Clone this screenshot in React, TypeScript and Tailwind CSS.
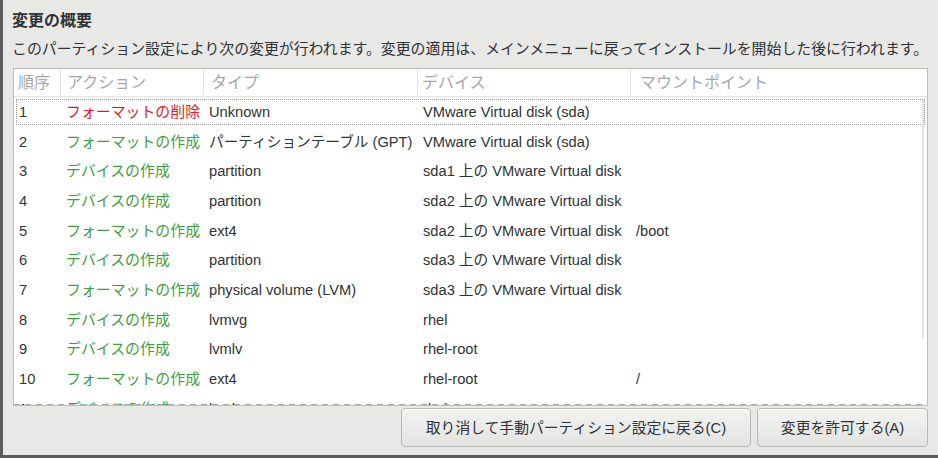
import React from 'react';

const RED = 'text-[#e8161c]';
const GREEN = 'text-[#3c9f3c]';

const rows = [
  { n: '1', action: 'フォーマットの削除', del: true, type: 'Unknown', device: 'VMware Virtual disk (sda)', mount: '' },
  { n: '2', action: 'フォーマットの作成', type: 'パーティションテーブル (GPT)', device: 'VMware Virtual disk (sda)', mount: '' },
  { n: '3', action: 'デバイスの作成', type: 'partition', device: 'sda1 上の VMware Virtual disk', mount: '' },
  { n: '4', action: 'デバイスの作成', type: 'partition', device: 'sda2 上の VMware Virtual disk', mount: '' },
  { n: '5', action: 'フォーマットの作成', type: 'ext4', device: 'sda2 上の VMware Virtual disk', mount: '/boot' },
  { n: '6', action: 'デバイスの作成', type: 'partition', device: 'sda3 上の VMware Virtual disk', mount: '' },
  { n: '7', action: 'フォーマットの作成', type: 'physical volume (LVM)', device: 'sda3 上の VMware Virtual disk', mount: '' },
  { n: '8', action: 'デバイスの作成', type: 'lvmvg', device: 'rhel', mount: '' },
  { n: '9', action: 'デバイスの作成', type: 'lvmlv', device: 'rhel-root', mount: '' },
  { n: '10', action: 'フォーマットの作成', type: 'ext4', device: 'rhel-root', mount: '/' },
  { n: '11', action: 'デバイスの作成', type: 'lvmlv', device: 'rhel-swap', mount: '' },
];

const headers = [
  { label: '順序', pad: 'pl-[4px]' },
  { label: 'アクション', pad: 'pl-[6px]' },
  { label: 'タイプ', pad: 'pl-[7px]' },
  { label: 'デバイス', pad: 'pl-[4px]' },
  { label: 'マウントポイント', pad: 'pl-[9px]' },
];

export default function App() {
  return (
    <div className="relative w-[938px] h-[458px] bg-[#e8e8e7] border-l-[3px] border-b-[3px] border-[#5c5c5c] pl-[9px] pr-[10px] flex flex-col text-[#2e3436] font-['Liberation_Sans','Noto_Sans_CJK_JP',sans-serif] overflow-hidden">
      {/* window edge highlight */}
      <div className="absolute -left-[3px] top-[128px] h-[22px] w-[3px] bg-[#2a4b70]" />

      <h1 className="mt-[11px] h-[20px] leading-[20px] text-[16px] font-bold">変更の概要</h1>
      <p className="mt-[7.5px] h-[20px] leading-[20px] text-[14.9px] whitespace-nowrap">
        このパーティション設定により次の変更が行われます。変更の適用は、メインメニューに戻ってインストールを開始した後に行われます。
      </p>

      {/* Changes list */}
      <div className="relative mt-[9.5px] ml-[1px] h-[338px] bg-white border border-[#bcbcba] flex flex-col text-[14.67px]">
        <div className="grid grid-cols-[47px_143px_214px_213px_1fr] h-[28px] shrink-0 border-b border-[#e6e6e6] text-[#a6a8a8] text-[16px]">
          {headers.map((h, i) => (
            <div
              key={h.label}
              className={`flex items-center whitespace-nowrap leading-[20px] ${i < 4 ? 'border-r border-[#e4e4e4]' : ''} ${h.pad}`}
            >
              {h.label}
            </div>
          ))}
        </div>

        <div className="relative flex-1 overflow-hidden">
          {rows.map((r, i) => (
            <div key={r.n} className="relative grid grid-cols-[47px_143px_214px_213px_1fr] h-[29.7px] leading-[20px] whitespace-nowrap">
              {i === 0 && <div className="absolute inset-x-[2px] top-[2px] bottom-[1.5px] border border-dotted border-[#9c9c9c]" />}
              <div className="flex items-center pl-[5px]">{r.n}</div>
              <div className={`flex items-center pl-[5px] text-[14.9px] ${r.del ? RED : GREEN}`}>{r.action}</div>
              <div className="flex items-center pl-[5px]">{r.type}</div>
              <div className="flex items-center pl-[5px]">{r.device}</div>
              <div className="flex items-center pl-[5px]">{r.mount}</div>
            </div>
          ))}
          {/* overlay scroll indicator */}
          <div className="absolute right-[3px] top-[3px] h-[238px] w-[2px] bg-[#e4e4e4]" />
          {/* undershoot */}
          <div className="absolute left-0 right-0 bottom-0 h-[1px] bg-[repeating-linear-gradient(90deg,#a9a9a9_0_6px,transparent_6px_11px)]" />
        </div>
      </div>

      <div className="mt-[2px] flex justify-end gap-[6px] text-[14.8px]">
        <button className="w-[350px] h-[39px] rounded-[4px] border border-[#b8b8b5] bg-gradient-to-b from-[#f3f3f2] to-[#e3e3e1] text-[#2e3436] leading-[20px] shadow-[inset_0_1px_0_rgba(255,255,255,0.8)]">
          取り消して手動パーティション設定に戻る(C)
        </button>
        <button className="w-[171px] h-[39px] rounded-[4px] border border-[#b8b8b5] bg-gradient-to-b from-[#f3f3f2] to-[#e3e3e1] text-[#2e3436] leading-[20px] shadow-[inset_0_1px_0_rgba(255,255,255,0.8)]">
          変更を許可する(A)
        </button>
      </div>
    </div>
  );
}
